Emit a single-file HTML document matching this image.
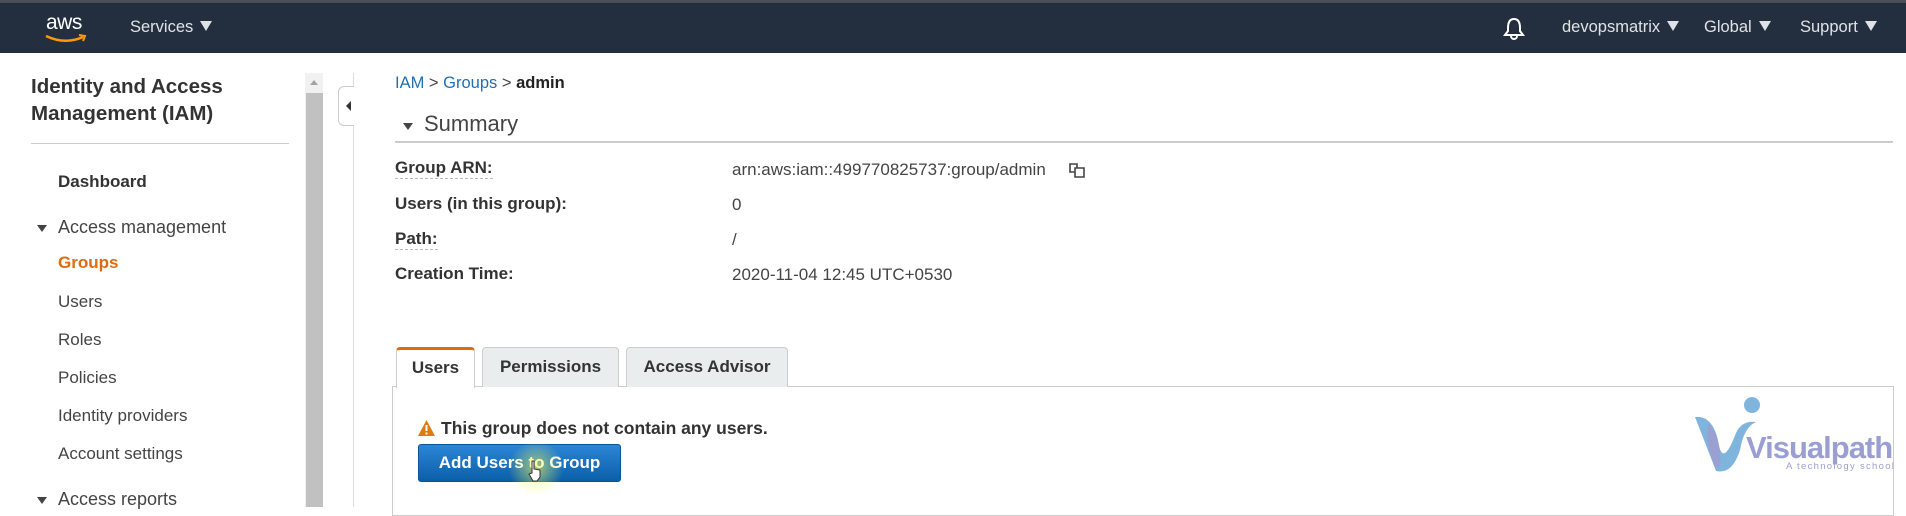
<!DOCTYPE html>
<html><head><meta charset="utf-8"><style>
*{margin:0;padding:0;box-sizing:border-box}
body{width:1906px;height:507px;overflow:hidden;background:#fff;font-family:"Liberation Sans",Arial,sans-serif;color:#333;position:relative}
.a{position:absolute;white-space:nowrap}
.hdr{position:absolute;left:0;top:0;width:1906px;height:53px;background:#232f3e;border-top:3px solid #4a4f55}
.hdr .t{position:absolute;color:#dfe3e8;font-size:16.5px;top:15px}
.tri{display:inline-block;width:0;height:0;border-left:6px solid transparent;border-right:6px solid transparent;border-top:10px solid currentColor;margin-left:7px;vertical-align:1px}
.nav{font-size:17px;color:#444}
.lbl{font-size:17px;font-weight:bold;color:#333}
.val{font-size:17px;color:#444;left:732px}
.dash{border-bottom:1px dashed #bbb;padding-bottom:1px}
.tab{position:absolute;top:347px;height:40px;background:#eaeded;border:1px solid #ccc;border-bottom:none;border-radius:4px 4px 0 0;font-size:17px;font-weight:bold;color:#333;text-align:center;line-height:38px}
</style></head><body>
<div class="hdr">
  <div class="a" style="left:46px;top:8px;color:#fff;font-size:21px;letter-spacing:-0.5px">aws</div>
  <svg class="a" style="left:45px;top:31px" width="42" height="10" viewBox="0 0 42 10"><path d="M1 2 Q20 11 38 3" stroke="#f90" stroke-width="2.5" fill="none"/><path d="M34 1 L40 2 L38 7" stroke="#f90" stroke-width="2" fill="none"/></svg>
  <div class="t" style="left:130px">Services<span class="tri"></span></div>
  <svg class="a" style="left:1503px;top:14px" width="22" height="24" viewBox="0 0 22 24"><path d="M11 2 C6 2 5 7 5 11 L5 14 L2 18 L20 18 L17 14 L17 11 C17 7 16 2 11 2 Z" stroke="#fff" stroke-width="2" fill="none"/><path d="M8 19 A3 3 0 0 0 14 19" stroke="#fff" stroke-width="2" fill="none"/></svg>
  <div class="t" style="left:1562px">devopsmatrix<span class="tri"></span></div>
  <div class="t" style="left:1704px">Global<span class="tri"></span></div>
  <div class="t" style="left:1800px">Support<span class="tri"></span></div>
</div>

<div class="a" style="left:31px;top:73px;font-size:20.5px;font-weight:bold;color:#333;line-height:27px">Identity and Access<br>Management (IAM)</div>
<div class="a" style="left:31px;top:143px;width:258px;height:1px;background:#ccc"></div>
<div class="a nav" style="left:58px;top:172px;font-weight:bold;color:#333">Dashboard</div>
<div class="a" style="left:37px;top:225px;border-left:5px solid transparent;border-right:5px solid transparent;border-top:7px solid #444"></div>
<div class="a nav" style="left:58px;top:217px;font-size:18px">Access management</div>
<div class="a nav" style="left:58px;top:253px;color:#dd6b10;font-weight:bold">Groups</div>
<div class="a nav" style="left:58px;top:292px">Users</div>
<div class="a nav" style="left:58px;top:330px">Roles</div>
<div class="a nav" style="left:58px;top:368px">Policies</div>
<div class="a nav" style="left:58px;top:406px">Identity providers</div>
<div class="a nav" style="left:58px;top:444px">Account settings</div>
<div class="a" style="left:37px;top:497px;border-left:5px solid transparent;border-right:5px solid transparent;border-top:7px solid #444"></div>
<div class="a nav" style="left:58px;top:489px;font-size:18px">Access reports</div>

<div class="a" style="left:305px;top:73px;width:18px;height:434px;background:#f1f1f1"></div>
<div class="a" style="left:306px;top:93px;width:17px;height:414px;background:#c1c1c1"></div>
<div class="a" style="left:310px;top:80px;border-left:4px solid transparent;border-right:4px solid transparent;border-bottom:5px solid #a3a3a3"></div>

<div class="a" style="left:353px;top:73px;width:1px;height:434px;background:#ddd"></div>
<div class="a" style="left:338px;top:86px;width:16px;height:40px;background:#fff;border:1px solid #ccc;border-right:none;border-radius:6px 0 0 6px"></div>
<div class="a" style="left:346px;top:101px;border-top:5px solid transparent;border-bottom:5px solid transparent;border-right:5px solid #333"></div>

<div class="a" style="left:395px;top:74px;font-size:16.5px;color:#444"><span style="color:#1f6fb2">IAM</span> &gt; <span style="color:#1f6fb2">Groups</span> &gt; <b style="color:#222">admin</b></div>
<div class="a" style="left:403px;top:123px;border-left:5px solid transparent;border-right:5px solid transparent;border-top:7px solid #444"></div>
<div class="a" style="left:424px;top:111px;font-size:22px;color:#444">Summary</div>
<div class="a" style="left:395px;top:141px;width:1498px;height:2px;background:#ccc"></div>

<div class="a lbl" style="left:395px;top:158px"><span class="dash">Group ARN:</span></div>
<div class="a lbl" style="left:395px;top:194px">Users (in this group):</div>
<div class="a lbl" style="left:395px;top:229px"><span class="dash">Path:</span></div>
<div class="a lbl" style="left:395px;top:264px">Creation Time:</div>
<div class="a val" style="top:160px">arn:aws:iam::499770825737:group/admin</div>
<svg class="a" style="left:1068px;top:161px" width="19" height="18" viewBox="0 0 19 18"><path d="M2 3 L9 3 L9 11 L2 11 Z" stroke="#444" stroke-width="1.6" fill="#fff"/><path d="M7 7 L16 7 L16 16 L7 16 Z" stroke="#444" stroke-width="1.6" fill="#fff"/></svg>
<div class="a val" style="top:195px">0</div>
<div class="a val" style="top:230px">/</div>
<div class="a val" style="top:265px">2020-11-04 12:45 UTC+0530</div>

<div class="a" style="left:392px;top:386px;width:1502px;height:130px;border:1px solid #ccc"></div>
<div class="tab" style="left:396px;width:79px;background:#fff;border-top:3px solid #dd6b10;height:41px;line-height:36px">Users</div>
<div class="tab" style="left:482px;width:137px">Permissions</div>
<div class="tab" style="left:626px;width:162px">Access Advisor</div>

<svg class="a" style="left:417px;top:419px" width="19" height="18" viewBox="0 0 19 18"><path d="M9.5 1 L18 17 L1 17 Z" fill="#e07b12"/><rect x="8.5" y="6" width="2" height="6" fill="#fff"/><rect x="8.5" y="13.5" width="2" height="2" fill="#fff"/></svg>
<div class="a" style="left:441px;top:418px;font-size:17.5px;font-weight:bold;color:#333">This group does not contain any users.</div>
<div class="a" style="left:418px;top:444px;width:203px;height:38px;border-radius:3px;background:linear-gradient(#2b86d6,#0a5fa8);border:1px solid #0b5597;color:#fff;font-size:17px;font-weight:bold;text-align:center;line-height:36px">Add Users to Group</div>
<div class="a" style="left:508px;top:440px;width:56px;height:56px;border-radius:50%;background:radial-gradient(rgba(255,255,80,.6),rgba(255,255,80,0) 70%)"></div>
<svg class="a" style="left:528px;top:460px" width="14" height="22" viewBox="0 0 14 22"><path d="M4 1 L6 1 L6 9 L12 10 L12 17 L9 21 L5 21 L1 14 L4 13 Z" fill="#fff" stroke="#333" stroke-width="1"/></svg>

<svg class="a" style="left:1692px;top:395px" width="74" height="80" viewBox="0 0 74 80"><circle cx="60" cy="10" r="8" fill="#7fb4dc"/><path d="M3 22 Q20 20 26 45 Q30 75 44 38 Q50 25 64 27 Q52 32 48 55 Q40 80 24 76 Q14 50 3 22 Z" fill="#7fb4dc"/><path d="M16 28 Q28 42 28 60 Q30 75 23 72 Q13 50 16 28 Z" fill="#9aa0d0"/></svg>
<div class="a" style="left:1746px;top:430px;font-size:31px;font-weight:bold;color:#9b9ed0;letter-spacing:-1px">Visualpath</div>
<div class="a" style="left:1786px;top:461px;font-size:9.5px;color:#9b9ed0;letter-spacing:1.3px">A technology school</div>
</body></html>
